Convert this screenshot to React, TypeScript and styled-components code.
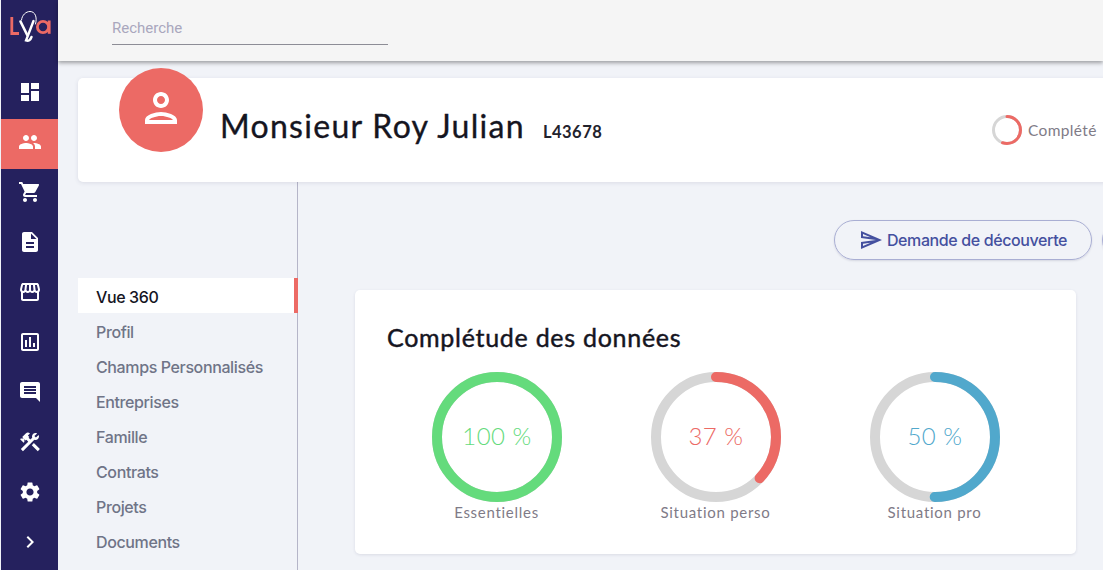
import React from "react";
import styled, { createGlobalStyle } from "styled-components";
import {
  MdDashboard, MdPeople, MdShoppingCart, MdDescription, MdStorefront, MdOutlineAssessment,
  MdMessage, MdConstruction, MdSettings, MdChevronRight, MdOutlinePerson, MdOutlineSend,
} from "react-icons/md";

const Global = createGlobalStyle`
  html, body { margin: 0; padding: 0; width: 1103px; height: 570px; overflow: hidden; background: #f1f3f8; }
`;
const Page = styled.div`
  display: flex; width: 1103px; height: 570px; overflow: hidden;
  font-family: "Inter", "Liberation Sans", sans-serif;
`;
const Rail = styled.nav`
  width: 57px; margin-left: 1px; flex: none; background: #25215e;
  display: flex; flex-direction: column; align-items: stretch;
`;
const LogoBox = styled.div`height: 67px; display: flex; justify-content: center; padding-top: 9px; box-sizing: border-box;`;
const RailItem = styled.div<{ $active?: boolean; $flip?: boolean }>`
  height: 50px; flex: none; display: flex; align-items: center; justify-content: center; color: #fff; box-sizing: border-box;
  font-size: 24px; background: ${(p) => (p.$active ? "#ec6a65" : "transparent")};
  margin: ${(p) => (p.$active ? "2px 0 -2px" : "0")};
  padding-bottom: ${(p) => (p.$active ? "4px" : "0")};
  svg { transform: ${(p) => (p.$flip ? "scaleX(-1)" : "none")}; }
`;
const Main = styled.div`flex: 1; min-width: 0; display: flex; flex-direction: column;`;
const TopBar = styled.header`
  height: 61px; flex: none; background: #f5f5f5; box-shadow: 0 2px 4px rgba(0,0,0,.35);
  padding: 18px 0 0 54px; box-sizing: border-box; position: relative; z-index: 2;
`;
const Search = styled.div`
  width: 276px; height: 27px; border-bottom: 1px solid #8d8d96; box-sizing: border-box;
  font: 400 15px/21px "Roboto", sans-serif; color: #a9a7bd;
`;
const Header = styled.section`
  margin: 17px 0 0 20px; width: 1040px; height: 104px; flex: none; background: #fff; border-radius: 5px 0 0 5px;
  box-shadow: 0 1px 4px rgba(60,60,100,.12); position: relative;
  display: flex; align-items: center; padding: 0 0 8px 142px; box-sizing: border-box;
`;
const Avatar = styled.div`
  position: absolute; left: 41px; top: -10px; width: 84px; height: 84px; border-radius: 50%;
  background: #ec6a65; color: #fff; display: flex; align-items: center; justify-content: center;
  font-size: 48px; padding-bottom: 5px; box-sizing: border-box;
`;
const NameRow = styled.div`display: flex; align-items: baseline; gap: 18px;`;
const Name = styled.h1`
  margin: 0; font: 400 32px/40px "Lato", "Liberation Sans", sans-serif; color: #15151f; letter-spacing: 1.3px;
  -webkit-text-stroke: .35px #15151f;
`;
const Code = styled.span`
  font: 700 16.5px/20px "Lato", sans-serif; color: #22222c; letter-spacing: .5px;
`;
const Complete = styled.div`
  position: absolute; left: 914px; top: 37px; display: flex; align-items: center; gap: 6px;
  font: 400 15.5px/20px "Lato", sans-serif; color: #7f7b87; letter-spacing: .35px;
`;
const Body = styled.div`flex: 1; min-height: 0; display: flex; padding-left: 20px;`;
const Side = styled.aside`
  width: 219px; flex: none; border-right: 1px solid #b5b5c8; padding-top: 96px;
`;
const SideItem = styled.div<{ $active?: boolean }>`
  height: 35px; padding: 2px 0 0 18px; display: flex; align-items: center; box-sizing: border-box;
  font-size: 16px; font-weight: 500; letter-spacing: -.38px;
  color: ${(p) => (p.$active ? "#15151f" : "#6f7487")};
  background: ${(p) => (p.$active ? "#fff" : "transparent")};
  border-right: ${(p) => (p.$active ? "4px solid #ec6a65" : "none")};
  margin-right: ${(p) => (p.$active ? "-1px" : "0")};
`;
const Content = styled.div`flex: 1; min-width: 0; padding: 38px 0 0 57px; display: flex; flex-direction: column;`;
const Actions = styled.div`display: flex; gap: 10px; margin-bottom: 30px; width: 780px;`;
const Pill = styled.button<{ $stub?: boolean }>`
  flex: none; height: 40px; width: ${(p) => (p.$stub ? "60px" : "258px")};
  margin-left: ${(p) => (p.$stub ? "0" : "479px")};
  border: 1px solid #a9aed3; border-radius: 20px; background: transparent; box-shadow: 0 1px 2px rgba(60,60,100,.15);
  color: #44509f; display: flex; align-items: center; justify-content: center; gap: 4px; padding: 0;
  font: 500 16px/20px "Inter", sans-serif; letter-spacing: -.38px;
`;
const Card = styled.section`
  width: 721px; height: 264px; box-sizing: border-box; background: #fff; border-radius: 5px;
  box-shadow: 0 1px 3px rgba(60,60,100,.12); padding: 31px 32px 0;
`;
const CardTitle = styled.h2`
  margin: 0; font: 400 25px/32px "Lato", sans-serif; color: #15151f; letter-spacing: .72px;
  -webkit-text-stroke: .45px #15151f;
`;
const Gauges = styled.div`display: flex; margin: 19px 0 0 0;`;
const GaugeBox = styled.div`
  width: 219px; display: flex; flex-direction: column; align-items: center; flex: none;
`;
const Ring = styled.div`position: relative; width: 130px; height: 130px;`;
const Value = styled.div<{ $c: string }>`
  position: absolute; inset: 0; display: flex; align-items: center; justify-content: center; padding: 0 0 2px 1px; box-sizing: border-box;
  font: 300 24px/30px "Lato", sans-serif; letter-spacing: .5px; color: ${(p) => p.$c};
`;
const Label = styled.div`
  margin-top: 0; font: 400 15px/20px "Lato", sans-serif; color: #7f7b87; letter-spacing: .72px;
`;

function Arc({ size, stroke, pct, color }: { size: number; stroke: number; pct: number; color: string }) {
  const r = (size - stroke) / 2;
  const c = 2 * Math.PI * r;
  return (
    <svg width={size} height={size} viewBox={`0 0 ${size} ${size}`}>
      <circle cx={size / 2} cy={size / 2} r={r} fill="none" stroke="#d6d6d6" strokeWidth={stroke} />
      <circle cx={size / 2} cy={size / 2} r={r} fill="none" stroke={color} strokeWidth={stroke}
        strokeLinecap="round" strokeDasharray={`${(c * pct) / 100} ${c}`}
        transform={`rotate(-90 ${size / 2} ${size / 2})`} />
    </svg>
  );
}

function Logo() {
  return (
    <svg width="42" height="36" viewBox="0 0 42 36" fill="none">
      <path d="M2.8 8V24.5H10" stroke="#ec6a65" strokeWidth="2.8" />
      <path d="M11.5 12.5L18.2 26" stroke="#fff" strokeWidth="2.6" strokeLinecap="round" />
      <path d="M24.5 12L17 31.5C19.5 32.5 21.5 31 22.5 28" stroke="#fff" strokeWidth="2.4" strokeLinecap="round" />
      <path d="M12.5 11C13 6 17 2.5 21 2.5C26 2.5 28.5 8 26.5 15" stroke="#fff" strokeWidth="1" strokeLinecap="round" />
      <circle cx="34" cy="18" r="5.6" stroke="#ec6a65" strokeWidth="2.8" />
      <path d="M40.2 11.5V24.8" stroke="#ec6a65" strokeWidth="2.8" />
    </svg>
  );
}

const railIcons = [MdDashboard, MdPeople, MdShoppingCart, MdDescription, MdStorefront, MdOutlineAssessment, MdMessage, MdConstruction, MdSettings, MdChevronRight];
const menu = ["Vue 360", "Profil", "Champs Personnalisés", "Entreprises", "Famille", "Contrats", "Projets", "Documents"];
const gauges = [
  { pct: 100, color: "#64db7c", label: "Essentielles" },
  { pct: 37, color: "#ec6a65", label: "Situation perso" },
  { pct: 50, color: "#51a8cc", label: "Situation pro" },
];

export default function App() {
  return (
    <Page>
      <Global />
      <Rail>
        <LogoBox><Logo /></LogoBox>
        {railIcons.map((I, i) => (
          <RailItem key={i} $active={i === 1} $flip={i === 6}><I /></RailItem>
        ))}
      </Rail>
      <Main>
        <TopBar><Search>Recherche</Search></TopBar>
        <Header>
          <Avatar><MdOutlinePerson /></Avatar>
          <NameRow>
            <Name>Monsieur Roy Julian</Name>
            <Code>L43678</Code>
          </NameRow>
          <Complete><Arc size={30} stroke={3} pct={55} color="#ec6a65" />Complété</Complete>
        </Header>
        <Body>
          <Side>
            {menu.map((m, i) => <SideItem key={m} $active={i === 0}>{m}</SideItem>)}
          </Side>
          <Content>
            <Actions>
              <Pill><MdOutlineSend size={24} />Demande de découverte</Pill>
              <Pill $stub />
            </Actions>
            <Card>
              <CardTitle>Complétude des données</CardTitle>
              <Gauges>
                {gauges.map((g) => (
                  <GaugeBox key={g.label}>
                    <Ring>
                      <Arc size={130} stroke={10} pct={g.pct} color={g.color} />
                      <Value $c={g.color}>{g.pct} %</Value>
                    </Ring>
                    <Label>{g.label}</Label>
                  </GaugeBox>
                ))}
              </Gauges>
            </Card>
          </Content>
        </Body>
      </Main>
    </Page>
  );
}
